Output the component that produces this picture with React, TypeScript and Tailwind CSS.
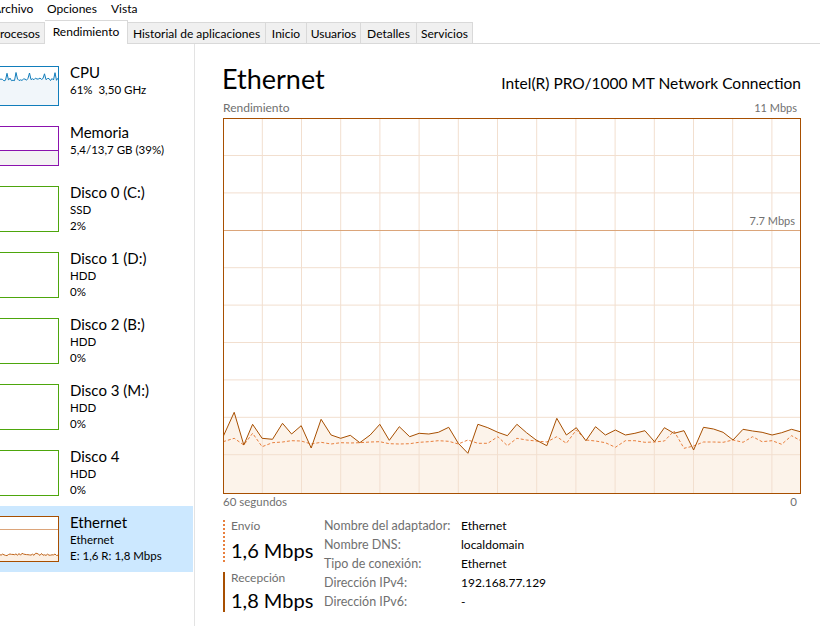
import React from "react";

type Kind = "cpu" | "mem" | "disk" | "net";

type SideItem = {
  title: string;
  lines: string[];
  kind: Kind;
  selected?: boolean;
};

const sideItems: SideItem[] = [
  { title: "CPU", lines: ["61%\u00a0 3,50 GHz"], kind: "cpu" },
  { title: "Memoria", lines: ["5,4/13,7 GB (39%)"], kind: "mem" },
  { title: "Disco 0 (C:)", lines: ["SSD", "2%"], kind: "disk" },
  { title: "Disco 1 (D:)", lines: ["HDD", "0%"], kind: "disk" },
  { title: "Disco 2 (B:)", lines: ["HDD", "0%"], kind: "disk" },
  { title: "Disco 3 (M:)", lines: ["HDD", "0%"], kind: "disk" },
  { title: "Disco 4", lines: ["HDD", "0%"], kind: "disk" },
  { title: "Ethernet", lines: ["Ethernet", "E: 1,6 R: 1,8 Mbps"], kind: "net", selected: true },
];

const tabs = [
  { label: "Historial de aplicaciones", w: "w-[138px]" },
  { label: "Inicio", w: "w-[41px]" },
  { label: "Usuarios", w: "w-[54px]" },
  { label: "Detalles", w: "w-[56px]" },
  { label: "Servicios", w: "w-[56px]" },
];

const details = [
  ["Nombre del adaptador:", "Ethernet"],
  ["Nombre DNS:", "localdomain"],
  ["Tipo de conexión:", "Ethernet"],
  ["Dirección IPv4:", "192.168.77.129"],
  ["Dirección IPv6:", "-"],
];

// sample positions read off the reference graph
const SX = [8, 37, 62, 85, 110, 137, 163, 187, 212, 238, 264, 290, 315, 340, 365, 392, 417, 442, 468, 495, 520, 545, 570, 597, 622, 647, 673, 699, 725, 750, 775, 800, 825, 853, 879, 904, 930, 955, 980, 1006, 1032, 1058, 1083, 1109, 1134, 1160, 1185, 1211, 1236, 1262, 1288, 1313, 1339, 1365, 1390, 1415, 1441, 1466, 1492, 1517];
const RECV = [170, 97, 195, 133, 175, 178, 130, 162, 137, 204, 118, 165, 175, 166, 188, 165, 133, 181, 140, 170, 160, 162, 157, 142, 190, 220, 133, 143, 157, 167, 133, 158, 180, 197, 115, 165, 143, 182, 140, 165, 150, 165, 160, 152, 185, 143, 160, 152, 210, 142, 147, 157, 180, 148, 153, 157, 165, 158, 148, 156];
const SEND = [185, 175, 195, 160, 200, 188, 186, 182, 183, 192, 187, 192, 188, 189, 188, 186, 185, 191, 192, 191, 187, 185, 182, 184, 192, 180, 190, 190, 170, 197, 175, 180, 183, 186, 170, 190, 150, 180, 183, 188, 202, 182, 182, 187, 186, 183, 153, 205, 198, 186, 186, 187, 180, 187, 170, 185, 182, 193, 167, 183];

const toPts = (ys: number[]) =>
  SX.map((x, i) => `${(x / 2.61 - 4).toFixed(1)},${(261 + ys[i] / 3).toFixed(1)}`).join(" ");

function seeded(seed: number) {
  let s = seed;
  return () => {
    s = (s * 9301 + 49297) % 233280;
    return s / 233280;
  };
}

function noiseLine(seed: number, base: number, amp: number, spikes: number[], spikeY: number) {
  const r = seeded(seed);
  const pts: string[] = [];
  for (let x = 0; x <= 69; x += 1.5) {
    let y = base + (r() - 0.5) * amp;
    if (spikes.some((s) => Math.abs(s - x) < 1)) y = spikeY + r() * 2;
    pts.push(`${x},${y.toFixed(1)}`);
  }
  return pts;
}

const cpuPts = noiseLine(3, 12.5, 3, [18, 27, 40, 55, 66], 5);
const netPts = noiseLine(11, 37.5, 2.5, [], 0);

function Thumb({ kind }: { kind: Kind }) {
  if (kind === "cpu") {
    return (
      <div className="-ml-[12px] h-[40px] w-[71px] shrink-0 border border-[#117dbb] bg-white">
        <svg width="69" height="38" className="block">
          <polygon points={`0,38 ${cpuPts.join(" ")} 69,38`} fill="#f1f6fa" />
          <polyline points={cpuPts.join(" ")} fill="none" stroke="#117dbb" strokeWidth="1" />
        </svg>
      </div>
    );
  }
  if (kind === "mem") {
    return (
      <div className="-ml-[12px] h-[40px] w-[71px] shrink-0 border border-[#8b12ae] bg-white">
        <svg width="69" height="38" className="block">
          <rect x="0" y="23" width="69" height="15" fill="#f4f2f4" />
          <line x1="0" y1="23.5" x2="69" y2="23.5" stroke="#8b12ae" strokeWidth="1" />
        </svg>
      </div>
    );
  }
  if (kind === "net") {
    return (
      <div className="-ml-[12px] h-[46px] w-[71px] shrink-0 border border-[#a74f01] bg-white">
        <svg width="69" height="44" className="block">
          <line x1="0" y1="12.5" x2="69" y2="12.5" stroke="#dca57a" strokeWidth="1" />
          <polygon points={`0,44 ${netPts.join(" ")} 69,44`} fill="#fcf0e4" />
          <polyline points={netPts.join(" ")} fill="none" stroke="#c0651b" strokeWidth="1" />
        </svg>
      </div>
    );
  }
  return <div className="-ml-[12px] h-[46px] w-[71px] shrink-0 border border-[#4da60c] bg-white" />;
}

function SidebarRow({ item }: { item: SideItem }) {
  const tall = item.kind !== "cpu" && item.kind !== "mem";
  return (
    <div
      className={
        (tall ? "h-[66px] " : "h-[60px] ") +
        (item.selected ? "bg-[#cce8ff] " : "") +
        "flex items-start pt-[10px]"
      }
    >
      <Thumb kind={item.kind} />
      <div className="ml-[11px] -mt-[4px] flex flex-col">
        <span className="text-[15px] leading-[20px] text-black">{item.title}</span>
        {item.lines.map((l, i) => (
          <span key={i} className="text-[11.5px] leading-[16px] text-black">
            {l}
          </span>
        ))}
      </div>
    </div>
  );
}

function Chart() {
  const vlines = Array.from({ length: 14 }, (_, k) => 38.3 + 39.2 * k);
  const hlines = Array.from({ length: 9 }, (_, k) => 36.5 + 37.4 * k);
  const recv = toPts(RECV);
  const send = toPts(SEND);
  return (
    <div className="relative mt-[2px] h-[376px] w-[578px] border border-[#a74f01]">
      <svg width="576" height="374" className="block">
        <polygon points={`0,374 ${recv} 576,374`} fill="#fcf3ea" />
        {vlines.map((x) => (
          <line key={x} x1={x} y1="0" x2={x} y2="374" stroke="#f2dfcf" strokeWidth="1" />
        ))}
        {hlines.map((y, k) =>
          k === 2 ? null : (
            <line key={y} x1="0" y1={y} x2="576" y2={y} stroke="#f2dfcf" strokeWidth="1" />
          ),
        )}
        <line x1="0" y1="111.5" x2="576" y2="111.5" stroke="#dba57a" strokeWidth="1" />
        <polyline points={send} fill="none" stroke="#e8803e" strokeWidth="1" strokeDasharray="3 2" />
        <polyline points={recv} fill="none" stroke="#a74f01" strokeWidth="1" />
      </svg>
      <span className="absolute right-[5px] top-[95px] text-[11px] leading-[14px] text-[#707070]">
        7.7 Mbps
      </span>
    </div>
  );
}

export default function App() {
  return (
    <div className="flex h-[626px] w-[820px] flex-col overflow-hidden bg-white font-['Lato','Noto_Sans',sans-serif] text-black">
      {/* menu bar */}
      <div className="flex h-[20px] items-start pt-[1px] text-[12px] leading-[16px]">
        <span className="-ml-[7px] w-[54px] shrink-0">Archivo</span>
        <span className="w-[64px] shrink-0">Opciones</span>
        <span>Vista</span>
      </div>

      {/* tabs */}
      <div className="flex h-[24px] items-end border-b border-[#d9d9d9] text-[12px] leading-[20px]">
        <div className="-ml-[14px] flex h-[21px] w-[59px] shrink-0 justify-end border-t border-r border-[#d9d9d9] bg-[#f0f0f0] pt-px pr-[4px]">
          Procesos
        </div>
        <div className="relative -mb-px flex h-[24px] w-[83px] shrink-0 justify-center border-t border-r border-[#d9d9d9] bg-white pt-px">
          Rendimiento
        </div>
        {tabs.map((t) => (
          <div
            key={t.label}
            className={
              t.w +
              " flex h-[21px] shrink-0 justify-center border-t border-r border-[#d9d9d9] bg-[#f0f0f0] pt-px"
            }
          >
            {t.label}
          </div>
        ))}
      </div>

      <div className="flex min-h-0 flex-1">
        {/* sidebar */}
        <div className="w-[195px] shrink-0 border-r border-[#e3e3e3] pt-[12px] pr-[1px]">
          {sideItems.map((item) => (
            <SidebarRow key={item.title + item.lines[0]} item={item} />
          ))}
        </div>

        {/* main */}
        <div className="flex flex-1 flex-col pt-[17px] pl-[28px] pr-[19px]">
          <div className="flex items-baseline justify-between">
            <span className="-ml-px text-[27px] leading-[36px]">Ethernet</span>
            <span className="text-[15.5px] leading-[20px]">Intel(R) PRO/1000 MT Network Connection</span>
          </div>
          <div className="mt-[3px] flex items-baseline justify-between leading-[16px] text-[#707070]">
            <span className="text-[12px]">Rendimiento</span>
            <span className="pr-[4px] text-[11px]">11 Mbps</span>
          </div>
          <Chart />
          <div className="flex justify-between text-[11.5px] leading-[16px] text-[#707070]">
            <span>60 segundos</span>
            <span className="pr-[4px]">0</span>
          </div>

          <div className="mt-[7px] flex">
            <div className="w-[101px] shrink-0 pt-[3px]">
              <div className="border-l-2 border-dotted border-[#e8803e] pl-[6px]">
                <div className="text-[12px] leading-[12px] text-[#707070]">Envío</div>
                <div className="mt-[6px] text-[20px] leading-[24px]">1,6 Mbps</div>
              </div>
              <div className="mt-[10px] border-l-2 border-[#a74f01] pl-[6px]">
                <div className="text-[12px] leading-[12px] text-[#707070]">Recepción</div>
                <div className="mt-[4px] text-[20px] leading-[24px]">1,8 Mbps</div>
              </div>
            </div>
            <div className="grid grid-cols-[137px_auto] items-baseline leading-[18px]">
              {details.map(([k, v]) => (
                <React.Fragment key={k}>
                  <span className="text-[12.5px] text-[#707070]">{k}</span>
                  <span className="text-[12px]">{v}</span>
                </React.Fragment>
              ))}
            </div>
          </div>
        </div>
      </div>
    </div>
  );
}
